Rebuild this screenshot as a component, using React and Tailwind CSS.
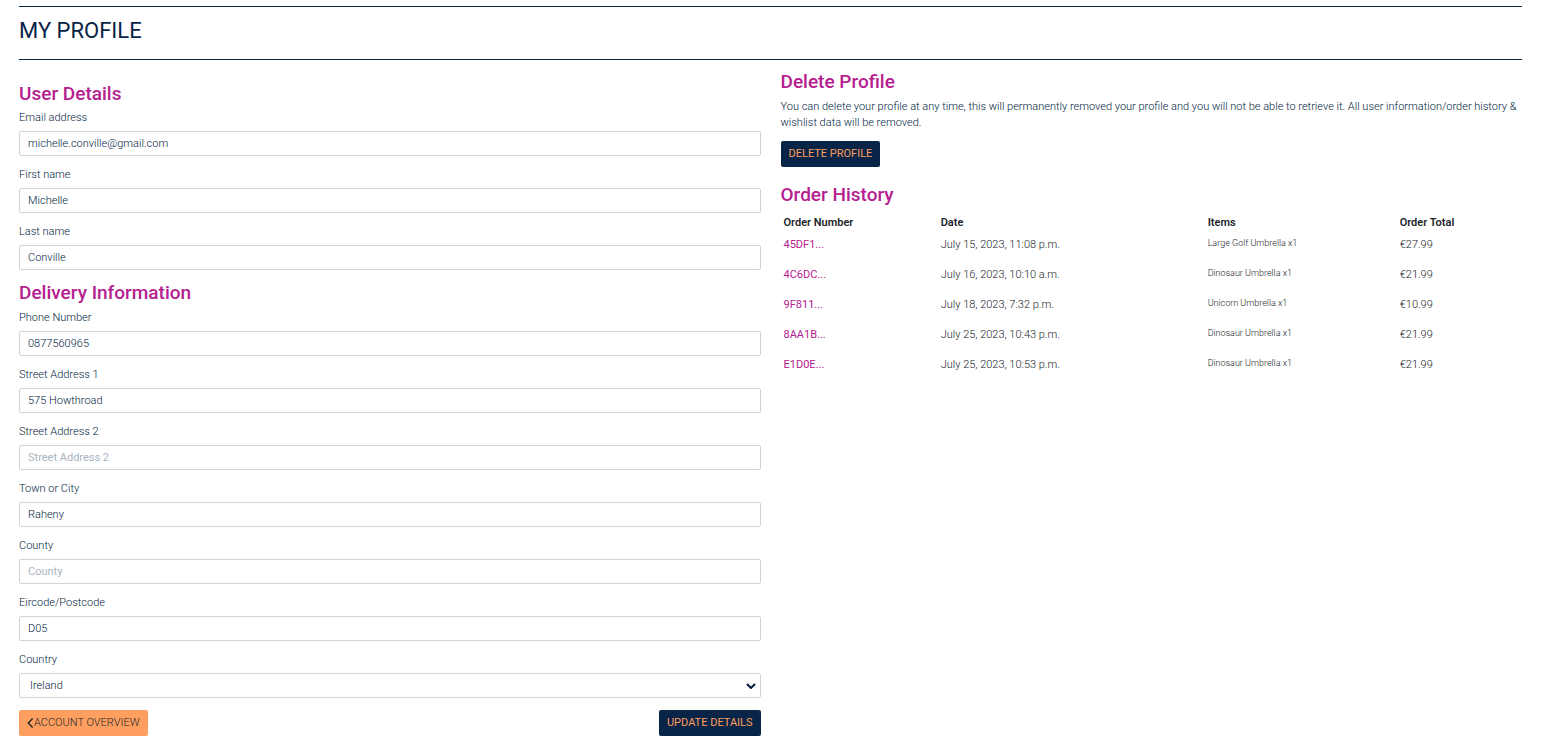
import React from "react";

const userFields = [
  { id: "email", label: "Email address", value: "michelle.conville@gmail.com", type: "email" },
  { id: "first_name", label: "First name", value: "Michelle" },
  { id: "last_name", label: "Last name", value: "Conville" },
];

const deliveryFields = [
  { id: "phone", label: "Phone Number", value: "0877560965", type: "tel" },
  { id: "street1", label: "Street Address 1", value: "575 Howthroad" },
  { id: "street2", label: "Street Address 2", value: "" },
  { id: "town", label: "Town or City", value: "Raheny" },
  { id: "county", label: "County", value: "" },
  { id: "postcode", label: "Eircode/Postcode", value: "D05" },
];

const orders = [
  { number: "45DF1...", date: "July 15, 2023, 11:08 p.m.", item: "Large Golf Umbrella x1", total: "€27.99" },
  { number: "4C6DC...", date: "July 16, 2023, 10:10 a.m.", item: "Dinosaur Umbrella x1", total: "€21.99" },
  { number: "9F811...", date: "July 18, 2023, 7:32 p.m.", item: "Unicorn Umbrella x1", total: "€10.99" },
  { number: "8AA1B...", date: "July 25, 2023, 10:43 p.m.", item: "Dinosaur Umbrella x1", total: "€21.99" },
  { number: "E1D0E...", date: "July 25, 2023, 10:53 p.m.", item: "Dinosaur Umbrella x1", total: "€21.99" },
];

function Heading({ children }) {
  return <h2 className="text-[19px] leading-6 font-medium text-[#b5208f]">{children}</h2>;
}

function Field({ id, label, value, type = "text" }) {
  return (
    <div className="flex flex-col gap-[5px]">
      <label htmlFor={id} className="leading-4">{label}</label>
      <input
        id={id}
        type={type}
        defaultValue={value}
        placeholder={label}
        className="h-[25px] w-full rounded-xs border border-[#ced4da] bg-white px-2 placeholder:font-normal placeholder:text-[#a9b4c2]"
      />
    </div>
  );
}

export default function App() {
  return (
    <main className="pt-1.5 pr-5 pb-2.5 pl-[19px] font-[Roboto,sans-serif] text-[11px] font-light text-[#001c40]">
      <header className="border-y border-[#082446] pt-2 pb-3">
        <h1 className="text-[22px] leading-8 font-normal text-[#082446]">MY PROFILE</h1>
      </header>

      <div className="grid grid-cols-2 gap-5">
        <form className="pt-[22px]" onSubmit={(e) => e.preventDefault()}>
          <Heading>User Details</Heading>
          <div className="mt-1 flex flex-col gap-[11px]">
            {userFields.map((f) => <Field key={f.id} {...f} />)}
          </div>
          <div className="mt-[11px]">
            <Heading>Delivery Information</Heading>
          </div>
          <div className="mt-[5px] flex flex-col gap-[11px]">
            {deliveryFields.map((f) => <Field key={f.id} {...f} />)}
            <div className="flex flex-col gap-[5px]">
              <label htmlFor="country" className="leading-4">Country</label>
              <div className="grid items-center">
                <select
                  id="country"
                  defaultValue="Ireland"
                  className="col-start-1 row-start-1 h-[25px] w-full appearance-none rounded-xs border border-[#ced4da] bg-white px-2.5 leading-6"
                >
                  <option>Ireland</option>
                </select>
                <svg
                  viewBox="0 0 10 6"
                  className="pointer-events-none col-start-1 row-start-1 mr-[5px] h-1.5 w-2.5 justify-self-end"
                  fill="none"
                  stroke="currentColor"
                  strokeWidth="2"
                  aria-hidden="true"
                >
                  <path d="M1 1l4 4 4-4" />
                </svg>
              </div>
            </div>
          </div>
          <div className="mt-3 flex justify-between">
            <a href="#account" className="flex h-[26px] items-center rounded-xs bg-[#ff9f5f] px-2 text-[#212529]">
              <svg viewBox="0 0 7 10" className="h-2.5 w-[7px]" fill="none" stroke="currentColor" strokeWidth="1.4" aria-hidden="true">
                <path d="M5.6 .6L1.3 5l4.3 4.4" />
              </svg>
              ACCOUNT OVERVIEW
            </a>
            <button type="submit" className="h-[26px] rounded-xs bg-[#082446] px-2 font-normal text-[#ff9f5f]">
              UPDATE DETAILS
            </button>
          </div>
        </form>

        <div className="pt-2.5">
          <section>
            <Heading>Delete Profile</Heading>
            <p className="mt-[5px] leading-4">
              You can delete your profile at any time, this will permanently removed your profile and you will not be able
              to retrieve it. All user information/order history &amp; wishlist data will be removed.
            </p>
            <button type="button" className="mt-2.5 h-[26px] rounded-xs bg-[#082446] px-2 font-normal text-[#ff9f5f]">
              DELETE PROFILE
            </button>
          </section>
          <section className="mt-4">
            <Heading>Order History</Heading>
            <table className="mt-[5px] w-full table-fixed text-left text-[#212529]">
              <thead>
                <tr className="align-top leading-4">
                  <th className="w-[21.2%] p-[3px] font-semibold">Order Number</th>
                  <th className="w-[36%] p-[3px] font-semibold">Date</th>
                  <th className="w-[25.9%] p-[3px] font-semibold">Items</th>
                  <th className="p-[3px] font-semibold">Order Total</th>
                </tr>
              </thead>
              <tbody>
                {orders.map((o) => (
                  <tr key={o.number} className="h-[30px] align-top leading-4">
                    <td className="p-[3px]"><a href={"#" + o.number} className="font-normal text-[#b5208f]">{o.number}</a></td>
                    <td className="p-[3px]">{o.date}</td>
                    <td className="p-[3px] text-[9px] leading-3">{o.item}</td>
                    <td className="p-[3px]">{o.total}</td>
                  </tr>
                ))}
              </tbody>
            </table>
          </section>
        </div>
      </div>
    </main>
  );
}
